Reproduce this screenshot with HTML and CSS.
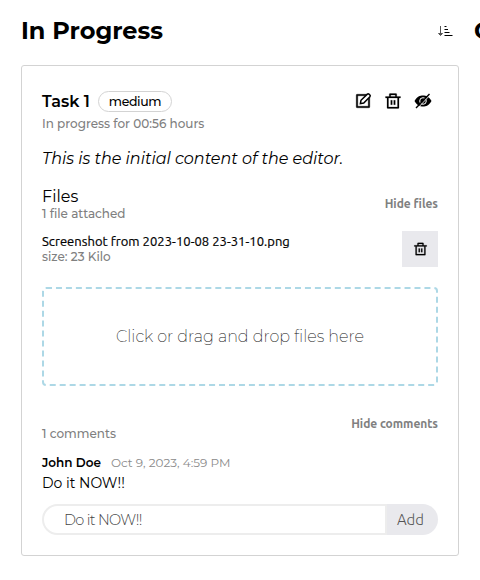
FILE: index.html
```html
<!DOCTYPE html>
<html lang="en">
<head>
<meta charset="utf-8">
<title>Tasks</title>
<link rel="stylesheet" href="styles.css">
</head>
<body>
<svg class="defs" width="0" height="0" aria-hidden="true">
  <symbol id="trash" viewBox="0 0 24 24"><path stroke="#000" stroke-width=".3" d="M17 6h5v2h-2v13a1 1 0 0 1-1 1H5a1 1 0 0 1-1-1V8H2V6h5V3a1 1 0 0 1 1-1h8a1 1 0 0 1 1 1v3zm1 2H6v12h12V8zm-9 3h2v6H9v-6zm4 0h2v6h-2v-6zM9 4v2h6V4H9z"/></symbol>
</svg>
<main class="board">
  <section class="column">
    <header class="column-head">
      <h1><span class="t-heading">In Progress</span></h1>
      <svg class="sort" width="16" height="12" viewBox="0 0 16 12"><path d="M3.5 1v9M1.500 8.500l2 2 2-2z" fill="#555" stroke="#555" stroke-width="1"/><path d="M7.500 1.500h2M7.500 4.500h3.500M7.500 7.500h5M7.500 10.500h8" stroke="#000" stroke-width="1"/></svg>
    </header>
    <article class="card">
      <div class="title-row">
        <h2><span class="t-title">Task 1</span></h2>
        <span class="badge"><span class="t-badge">medium</span></span>
        <div class="actions">
          <svg width="18" height="18" viewBox="0 0 24 24"><path stroke="#000" stroke-width=".5" d="M16.757 3l-2 2H5v14h14V9.243l2-2V20a1 1 0 0 1-1 1H4a1 1 0 0 1-1-1V4a1 1 0 0 1 1-1h12.757z"/><path d="M8.500 15.500l.8-4.500L17.800 2.800a1.500 1.500 0 0 1 2.100 0l1.300 1.300a1.500 1.500 0 0 1 0 2.100L13 14.700z" fill="none" stroke="#000" stroke-width="2"/></svg>
          <svg width="18" height="18"><use href="#trash"/></svg>
          <svg width="18" height="18" viewBox="0 0 18 18"><path d="M.5 9C3 4.500 6 3.500 9 3.500S15 4.500 17.500 9C15 13.500 12 14.500 9 14.500S3 13.500.5 9z"/><circle cx="9" cy="9" r="3.300" fill="none" stroke="#fff" stroke-width="1"/><path d="M2.800 17L16.500 2.600" stroke="#fff" stroke-width="1"/><path d="M2 16L15.500 2" stroke="#000" stroke-width="1.400"/></svg>
        </div>
      </div>
      <p class="meta status"><span class="t-status">In progress for 00:56 hours</span></p>
      <p class="content"><em class="t-content">This is the initial content of the editor.</em></p>
      <div class="files-head">
        <div>
          <h3><span class="t-files">Files</span></h3>
          <p class="meta"><span class="t-attached">1 file attached</span></p>
        </div>
        <button class="toggle"><span class="t-hidefiles">Hide files</span></button>
      </div>
      <div class="file">
        <div>
          <p class="file-name"><span class="t-filename">Screenshot from 2023-10-08 23-31-10.png</span></p>
          <p class="meta"><span class="t-size">size: 23 Kilo</span></p>
        </div>
        <button class="remove" aria-label="Remove file"><svg width="15" height="16"><use href="#trash"/></svg></button>
      </div>
      <div class="dropzone"><span class="t-drop">Click or drag and drop files here</span></div>
      <div class="comments-head">
        <p class="meta"><span class="t-count">1 comments</span></p>
        <button class="toggle"><span class="t-hidecomments">Hide comments</span></button>
      </div>
      <div class="comment-by"><b class="t-author">John Doe</b><time class="t-date">Oct 9, 2023, 4:59 PM</time></div>
      <p class="comment"><span class="t-comment">Do it NOW!!</span></p>
      <div class="composer">
        <div class="field"><span class="t-field">Do it NOW!!</span></div>
        <button class="add"><span class="t-add">Add</span></button>
      </div>
    </article>
  </section>
  <section class="column"><header class="column-head"><h1><span class="t-heading">Completed</span></h1></header></section>
</main>
</body>
</html>
```
FILE: styles.css
```css
* { box-sizing: border-box; }
body { margin: 0; width: 480px; height: 580px; overflow: hidden; background: #fff; color: #000; font-family: Montserrat, Inter, sans-serif; }
h1, h2, h3, p { margin: 0; font-weight: 400; }
button { border: 0; padding: 0; background: none; color: inherit; }
svg { display: block; }
.defs { position: absolute; }
.board { display: flex; gap: 15px; padding: 14px 0 0 21px; width: 960px; }
.column { flex: 0 0 438px; }
.column-head { display: flex; justify-content: space-between; align-items: center; height: 30px; margin-bottom: 21px; padding-right: 6px; }
.column-head h1 { line-height: 30px; }
.sort { margin-top: 4px; }
.card { height: 491px; padding: 20px; border: 1px solid #d3d3d3; border-radius: 3px; }
.title-row { display: flex; align-items: center; height: 30px; }
.title-row h2 { width: 56px; line-height: 18px; margin-bottom: 2px; white-space: nowrap; }
.badge { display: flex; align-items: center; justify-content: center; width: 74px; height: 21px; border: 1px solid #d3d3d3; border-radius: 11px; }
.actions { display: flex; gap: 12px; margin-left: auto; margin-right: 6px; }
.meta { height: 15px; line-height: 13px; color: #808080; white-space: nowrap; }
.status { height: 16px; line-height: 14px; }
.content { margin-top: 17px; height: 20px; line-height: 20px; white-space: nowrap; }
.files-head { display: flex; justify-content: space-between; align-items: center; margin-top: 17px; height: 35px; }
.files-head h3 { height: 20px; line-height: 20px; }
.toggle { height: 15px; line-height: 15px; color: #808080; white-space: nowrap; }
.file { display: flex; justify-content: space-between; align-items: center; margin-top: 10px; height: 36px; }
.file-name { height: 15px; line-height: 13px; white-space: nowrap; }
.remove { display: flex; align-items: center; justify-content: center; width: 36px; height: 36px; background: #e9e9ed; }
.dropzone { display: flex; align-items: center; justify-content: center; margin-top: 20px; height: 99px; border: 2px dashed #add8e6; border-radius: 4px; color: #111; }
.comments-head { display: flex; justify-content: space-between; align-items: flex-start; margin-top: 30px; height: 25px; }
.comments-head .meta { align-self: flex-end; }
.comment-by { display: flex; gap: 10px; align-items: center; margin-top: 14px; height: 16px; line-height: 16px; white-space: nowrap; }
.comment { margin-top: 2px; height: 20px; line-height: 20px; }
.composer { display: flex; margin-top: 11px; height: 31px; }
.field { display: flex; align-items: center; width: 345px; padding-left: 20px; border: 2px solid #ededed; border-radius: 16px 0 0 16px; color: #444; }
.add { flex: 1; background: #e9e9ed; border-radius: 0 16px 16px 0; color: #555; padding-right: 4px; }

.t-heading { font-size: 24px; font-weight: 700; }
.t-title { font-size: 16px; font-weight: 600; }
.t-badge { font-size: 12.5px; font-weight: 500; letter-spacing: -0.35px; }
.t-status, .t-attached, .t-size, .t-count { font-size: 12px; font-weight: 500; }
.t-content { font-size: 16px; letter-spacing: -0.02px; }
.t-files { font-size: 16px; }
.t-hidefiles, .t-hidecomments { font-family: Ubuntu, "Open Sans", sans-serif; font-size: 12px; font-weight: 600; letter-spacing: -0.04px; }
.t-filename { font-family: Ubuntu, "Noto Sans", sans-serif; font-size: 13px; letter-spacing: 0.04px; -webkit-text-stroke: 0.2px #000; }
.t-drop { font-size: 16px; font-weight: 200; }
.t-author { font-size: 12px; font-weight: 600; }
.t-date { font-size: 12px; color: #8a8a8a; }
.t-comment { font-size: 14px; }
.t-field { font-size: 14.5px; font-weight: 300; letter-spacing: -0.65px; }
.t-add { font-family: Ubuntu, "Open Sans", sans-serif; font-size: 15px; font-weight: 300; }
```
